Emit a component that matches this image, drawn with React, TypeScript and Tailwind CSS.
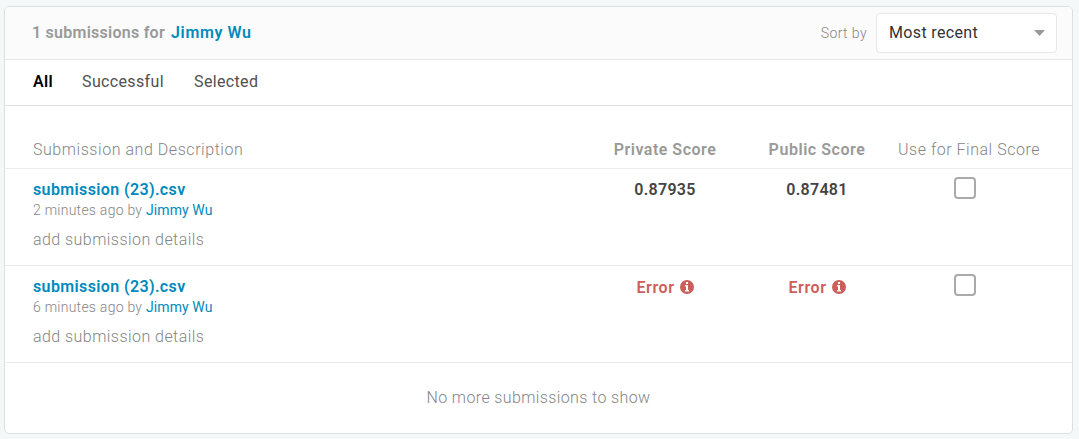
import React from "react";

type Submission = { age: string; privateScore?: string; publicScore?: string };

const submissions: Submission[] = [
  { age: "2 minutes ago", privateScore: "0.87935", publicScore: "0.87481" },
  { age: "6 minutes ago" },
];

function Score({ value }: { value?: string }) {
  if (value) return <span className="pt-px text-[16px] font-semibold tracking-[0.3px] text-[#444]">{value}</span>;
  return (
    <span className="flex items-center gap-[5px] pt-[3px] text-[16px] font-semibold tracking-[0.6px] text-[#cb5f5b]">
      Error
      <svg className="-mt-[2px]" width="14" height="14" viewBox="0 0 14 14">
        <circle cx="7" cy="7" r="7" fill="#cb5f5b" />
        <path fill="#fff" d="M6 2h2v2H6zM5 5h3v5h1v1.500H5V10h1V6.500H5z" />
      </svg>
    </span>
  );
}

export default function App() {
  return (
    <main className="h-[439px] w-[1079px] bg-[#f5f8f9] pt-[6px] pl-1 font-['Roboto',sans-serif] text-[16px] text-[#858585]">
      <section className="h-[428px] w-[1069px] overflow-hidden rounded-[5px] border border-[#dae1e1] bg-white">
        <header className="flex h-[53px] items-center border-b border-[#e5e7e7] bg-[#fbfbfb] pr-[15px] pl-[27px]">
          <h1 className="font-semibold tracking-[0.25px] text-[#999]">1 submissions for <span className="ml-[2px] tracking-[0.6px] text-[#008abc]">Jimmy Wu</span></h1>
          <span className="mr-[9px] ml-auto text-[14px] font-light tracking-[0.4px]">Sort by</span>
          <button className="flex h-[40px] w-[181px] items-center justify-between rounded-[4px] border border-[#e6e7e8] bg-white pr-[11px] pl-3 tracking-[0.35px] text-[#333]">
            Most recent
            <svg width="11" height="6" viewBox="0 0 11 6"><path d="M0 0h11L5.500 6z" fill="#999" /></svg>
          </button>
        </header>
        <nav className="flex h-[46px] items-center gap-[30px] border-b border-[#dee0e0] pb-[2px] pl-[28px] tracking-[0.35px] text-[#505050]">
          <b className="-mr-px font-semibold text-black">All</b><span className="w-[82px] whitespace-nowrap">Successful</span><span>Selected</span>
        </nav>
        <div className="flex h-[63px] items-end border-b border-[#ececec] pb-[6px] pl-[28px]">
          <span className="w-[556px] font-light tracking-[0.55px]">Submission and Description</span>
          <b className="w-[152px] text-center font-semibold tracking-[0.5px] text-[#999]">Private Score</b>
          <b className="w-[152px] text-center font-semibold tracking-[0.55px] text-[#999]">Public Score</b>
          <span className="w-[152px] text-center font-light tracking-[0.52px]">Use for Final Score</span>
        </div>
        {submissions.map((s) => (
          <article key={s.age} className="flex h-[97px] border-b border-[#ececec] pt-[8px] pl-[28px]">
            <div className="w-[556px] pt-px">
              <div className="h-[22px] font-semibold tracking-[0.38px] text-[#008abc]">submission (23).csv</div>
              <div className="text-[14px] leading-5 font-light tracking-[0.25px]">{s.age} by <span className="font-normal tracking-[0.1px] text-[#008abc]">Jimmy Wu</span></div>
              <div className="mt-2 font-light tracking-[0.45px]">add submission details</div>
            </div>
            <div className="flex h-6 w-[152px] justify-center"><Score value={s.privateScore} /></div>
            <div className="flex h-6 w-[152px] justify-center"><Score value={s.publicScore} /></div>
            <div className="flex w-[144px] justify-center"><span className="h-[22px] w-[22px] rounded-[4px] border-2 border-[#aaa]" /></div>
          </article>
        ))}
        <footer className="flex h-[70px] items-center justify-center font-light tracking-[0.38px]">No more submissions to show</footer>
      </section>
    </main>
  );
}
